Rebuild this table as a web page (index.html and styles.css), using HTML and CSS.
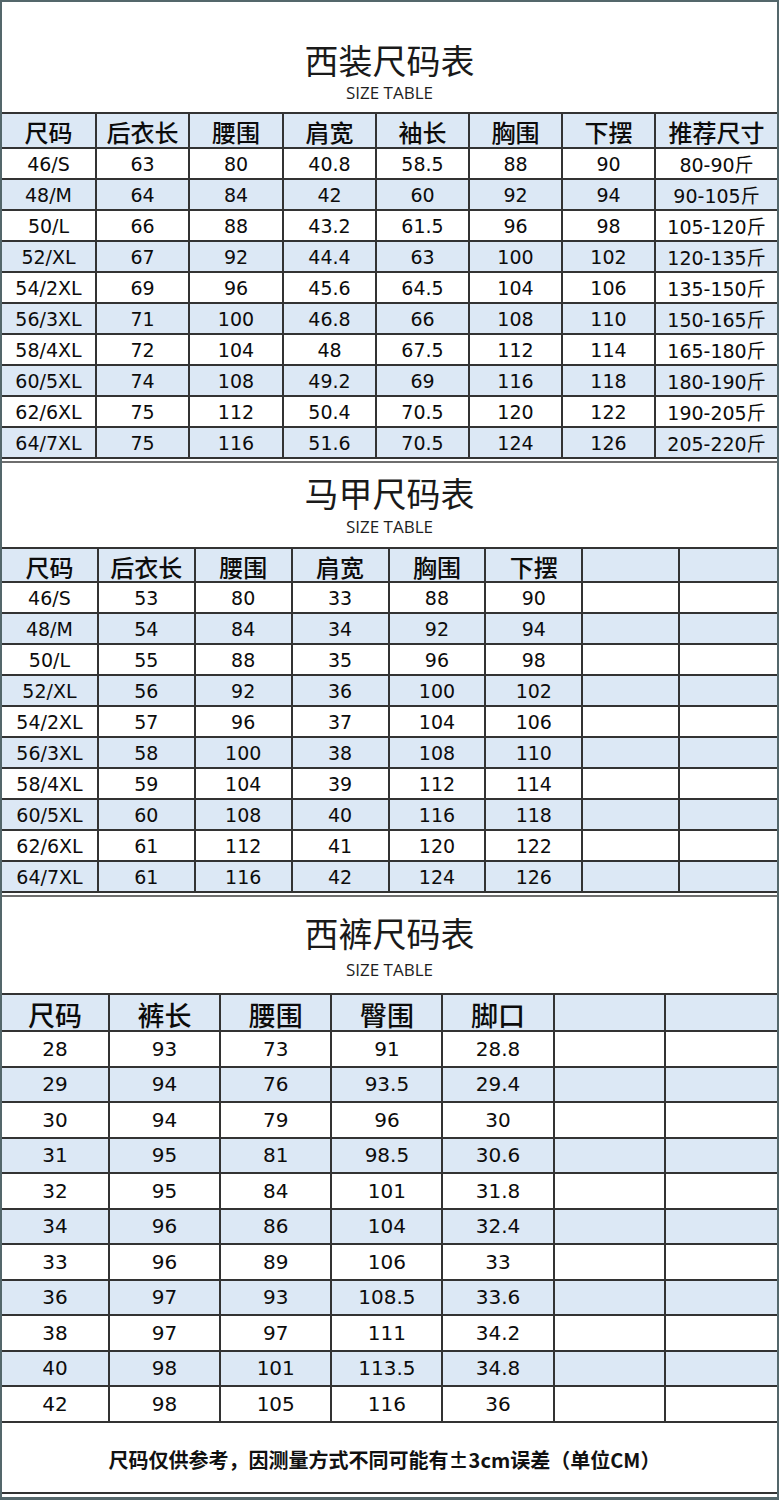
FILE: index.html
```html
<!DOCTYPE html>
<html lang="zh-CN">
<head>
<meta charset="utf-8">
<title>尺码表</title>
<link rel="stylesheet" href="styles.css">
</head>
<body>
<div class="sheet">
  <section class="block">
    <div class="head head-1">
      <div class="title">西装尺码表</div>
      <div class="sub sub-1">SIZE TABLE</div>
    </div>
    <div class="table t-suit">
      <div class="row hd"><div class="c">尺码</div><div class="c">后衣长</div><div class="c">腰围</div><div class="c">肩宽</div><div class="c">袖长</div><div class="c">胸围</div><div class="c">下摆</div><div class="c">推荐尺寸</div></div>
      <div class="row"><div class="c">46/S</div><div class="c">63</div><div class="c">80</div><div class="c">40.8</div><div class="c">58.5</div><div class="c">88</div><div class="c">90</div><div class="c">80-90斤</div></div>
      <div class="row alt"><div class="c">48/M</div><div class="c">64</div><div class="c">84</div><div class="c">42</div><div class="c">60</div><div class="c">92</div><div class="c">94</div><div class="c">90-105斤</div></div>
      <div class="row"><div class="c">50/L</div><div class="c">66</div><div class="c">88</div><div class="c">43.2</div><div class="c">61.5</div><div class="c">96</div><div class="c">98</div><div class="c">105-120斤</div></div>
      <div class="row alt"><div class="c">52/XL</div><div class="c">67</div><div class="c">92</div><div class="c">44.4</div><div class="c">63</div><div class="c">100</div><div class="c">102</div><div class="c">120-135斤</div></div>
      <div class="row"><div class="c">54/2XL</div><div class="c">69</div><div class="c">96</div><div class="c">45.6</div><div class="c">64.5</div><div class="c">104</div><div class="c">106</div><div class="c">135-150斤</div></div>
      <div class="row alt"><div class="c">56/3XL</div><div class="c">71</div><div class="c">100</div><div class="c">46.8</div><div class="c">66</div><div class="c">108</div><div class="c">110</div><div class="c">150-165斤</div></div>
      <div class="row"><div class="c">58/4XL</div><div class="c">72</div><div class="c">104</div><div class="c">48</div><div class="c">67.5</div><div class="c">112</div><div class="c">114</div><div class="c">165-180斤</div></div>
      <div class="row alt"><div class="c">60/5XL</div><div class="c">74</div><div class="c">108</div><div class="c">49.2</div><div class="c">69</div><div class="c">116</div><div class="c">118</div><div class="c">180-190斤</div></div>
      <div class="row"><div class="c">62/6XL</div><div class="c">75</div><div class="c">112</div><div class="c">50.4</div><div class="c">70.5</div><div class="c">120</div><div class="c">122</div><div class="c">190-205斤</div></div>
      <div class="row alt"><div class="c">64/7XL</div><div class="c">75</div><div class="c">116</div><div class="c">51.6</div><div class="c">70.5</div><div class="c">124</div><div class="c">126</div><div class="c">205-220斤</div></div>
    </div>
  </section>
  <div class="sep"></div>
  <section class="block">
    <div class="head head-2">
      <div class="title">马甲尺码表</div>
      <div class="sub sub-2">SIZE TABLE</div>
    </div>
    <div class="table t-vest">
      <div class="row hd"><div class="c">尺码</div><div class="c">后衣长</div><div class="c">腰围</div><div class="c">肩宽</div><div class="c">胸围</div><div class="c">下摆</div><div class="c"></div><div class="c"></div></div>
      <div class="row"><div class="c">46/S</div><div class="c">53</div><div class="c">80</div><div class="c">33</div><div class="c">88</div><div class="c">90</div><div class="c"></div><div class="c"></div></div>
      <div class="row alt"><div class="c">48/M</div><div class="c">54</div><div class="c">84</div><div class="c">34</div><div class="c">92</div><div class="c">94</div><div class="c"></div><div class="c"></div></div>
      <div class="row"><div class="c">50/L</div><div class="c">55</div><div class="c">88</div><div class="c">35</div><div class="c">96</div><div class="c">98</div><div class="c"></div><div class="c"></div></div>
      <div class="row alt"><div class="c">52/XL</div><div class="c">56</div><div class="c">92</div><div class="c">36</div><div class="c">100</div><div class="c">102</div><div class="c"></div><div class="c"></div></div>
      <div class="row"><div class="c">54/2XL</div><div class="c">57</div><div class="c">96</div><div class="c">37</div><div class="c">104</div><div class="c">106</div><div class="c"></div><div class="c"></div></div>
      <div class="row alt"><div class="c">56/3XL</div><div class="c">58</div><div class="c">100</div><div class="c">38</div><div class="c">108</div><div class="c">110</div><div class="c"></div><div class="c"></div></div>
      <div class="row"><div class="c">58/4XL</div><div class="c">59</div><div class="c">104</div><div class="c">39</div><div class="c">112</div><div class="c">114</div><div class="c"></div><div class="c"></div></div>
      <div class="row alt"><div class="c">60/5XL</div><div class="c">60</div><div class="c">108</div><div class="c">40</div><div class="c">116</div><div class="c">118</div><div class="c"></div><div class="c"></div></div>
      <div class="row"><div class="c">62/6XL</div><div class="c">61</div><div class="c">112</div><div class="c">41</div><div class="c">120</div><div class="c">122</div><div class="c"></div><div class="c"></div></div>
      <div class="row alt"><div class="c">64/7XL</div><div class="c">61</div><div class="c">116</div><div class="c">42</div><div class="c">124</div><div class="c">126</div><div class="c"></div><div class="c"></div></div>
    </div>
  </section>
  <div class="sep"></div>
  <section class="block">
    <div class="head head-3">
      <div class="title">西裤尺码表</div>
      <div class="sub sub-3">SIZE TABLE</div>
    </div>
    <div class="table t-pants">
      <div class="row hd"><div class="c">尺码</div><div class="c">裤长</div><div class="c">腰围</div><div class="c">臀围</div><div class="c">脚口</div><div class="c"></div><div class="c"></div></div>
      <div class="row"><div class="c">28</div><div class="c">93</div><div class="c">73</div><div class="c">91</div><div class="c">28.8</div><div class="c"></div><div class="c"></div></div>
      <div class="row alt"><div class="c">29</div><div class="c">94</div><div class="c">76</div><div class="c">93.5</div><div class="c">29.4</div><div class="c"></div><div class="c"></div></div>
      <div class="row"><div class="c">30</div><div class="c">94</div><div class="c">79</div><div class="c">96</div><div class="c">30</div><div class="c"></div><div class="c"></div></div>
      <div class="row alt"><div class="c">31</div><div class="c">95</div><div class="c">81</div><div class="c">98.5</div><div class="c">30.6</div><div class="c"></div><div class="c"></div></div>
      <div class="row"><div class="c">32</div><div class="c">95</div><div class="c">84</div><div class="c">101</div><div class="c">31.8</div><div class="c"></div><div class="c"></div></div>
      <div class="row alt"><div class="c">34</div><div class="c">96</div><div class="c">86</div><div class="c">104</div><div class="c">32.4</div><div class="c"></div><div class="c"></div></div>
      <div class="row"><div class="c">33</div><div class="c">96</div><div class="c">89</div><div class="c">106</div><div class="c">33</div><div class="c"></div><div class="c"></div></div>
      <div class="row alt"><div class="c">36</div><div class="c">97</div><div class="c">93</div><div class="c">108.5</div><div class="c">33.6</div><div class="c"></div><div class="c"></div></div>
      <div class="row"><div class="c">38</div><div class="c">97</div><div class="c">97</div><div class="c">111</div><div class="c">34.2</div><div class="c"></div><div class="c"></div></div>
      <div class="row alt"><div class="c">40</div><div class="c">98</div><div class="c">101</div><div class="c">113.5</div><div class="c">34.8</div><div class="c"></div><div class="c"></div></div>
      <div class="row"><div class="c">42</div><div class="c">98</div><div class="c">105</div><div class="c">116</div><div class="c">36</div><div class="c"></div><div class="c"></div></div>
    </div>
    <div class="foot">尺码仅供参考，因测量方式不同可能有±3cm误差（单位CM）</div>
  </section>
</div>
</body>
</html>
```
FILE: styles.css
```css
html, body {
  margin: 0;
  padding: 0;
  background: #ffffff;
}

.sheet {
  width: 779px;
  height: 1500px;
  box-sizing: border-box;
  border: 2px solid #54676b;
  border-bottom-width: 3px;
  background: #ffffff;
  color: #0c0c0c;
  font-family: "DejaVu Sans", "Noto Sans CJK SC", sans-serif;
  font-size: 19px;
}

.head {
  box-sizing: border-box;
  display: flex;
  flex-direction: column;
  align-items: center;
}

.head-1 { height: 110px; padding-top: 38px; }
.head-2 { height: 84px; padding-top: 10px; }
.head-3 { height: 96px; padding-top: 16px; }

.title {
  font-family: "Noto Sans CJK SC", sans-serif;
  font-size: 34px;
  line-height: 40px;
  color: #1a1a1a;
}

.sub {
  font-family: "Open Sans", "DejaVu Sans", sans-serif;
  font-size: 17px;
  line-height: 20px;
  color: #1e1e1e;
}

.sub-1 { margin-top: 3px; }
.sub-2 { margin-top: 4px; }
.sub-3 { margin-top: 7px; }

.table {
  border-top: 2px solid #333333;
}

.row {
  display: grid;
  box-sizing: border-box;
  border-bottom: 2px solid #333333;
  background: #ffffff;
}

.row.alt, .row.hd {
  background: #dce8f5;
}

.c {
  box-sizing: border-box;
  border-right: 2px solid #333333;
  display: flex;
  align-items: center;
  justify-content: center;
  white-space: nowrap;
}

.c:last-child {
  border-right: 0;
}

.hd .c {
  font-family: "Noto Sans CJK SC", sans-serif;
  font-size: 24px;
  font-weight: 500;
}

.t-suit .row {
  grid-template-columns: 95px 93px 94px 93px 93px 93px 93px 1fr;
  height: 31px;
}
.t-suit .row.hd { height: 35px; }

.t-vest .row {
  grid-template-columns: repeat(8, 1fr);
  height: 31px;
}
.t-vest .row.hd { height: 34px; }

.t-pants .row {
  grid-template-columns: 108px repeat(6, 1fr);
  height: 35.5px;
  font-size: 20px;
}
.t-pants .row.hd { height: 37px; }
.t-pants .hd .c { font-size: 27px; }

.sep {
  height: 2px;
  margin-top: 2px;
  background: #6e6e6e;
}

.foot {
  box-sizing: border-box;
  height: 71.5px;
  border-bottom: 2px solid #333333;
  display: flex;
  align-items: center;
  justify-content: center;
  padding-top: 4px;
  padding-right: 10px;
  font-family: "Noto Sans CJK SC", sans-serif;
  font-weight: 700;
  font-size: 20px;
  color: #111111;
}
```
